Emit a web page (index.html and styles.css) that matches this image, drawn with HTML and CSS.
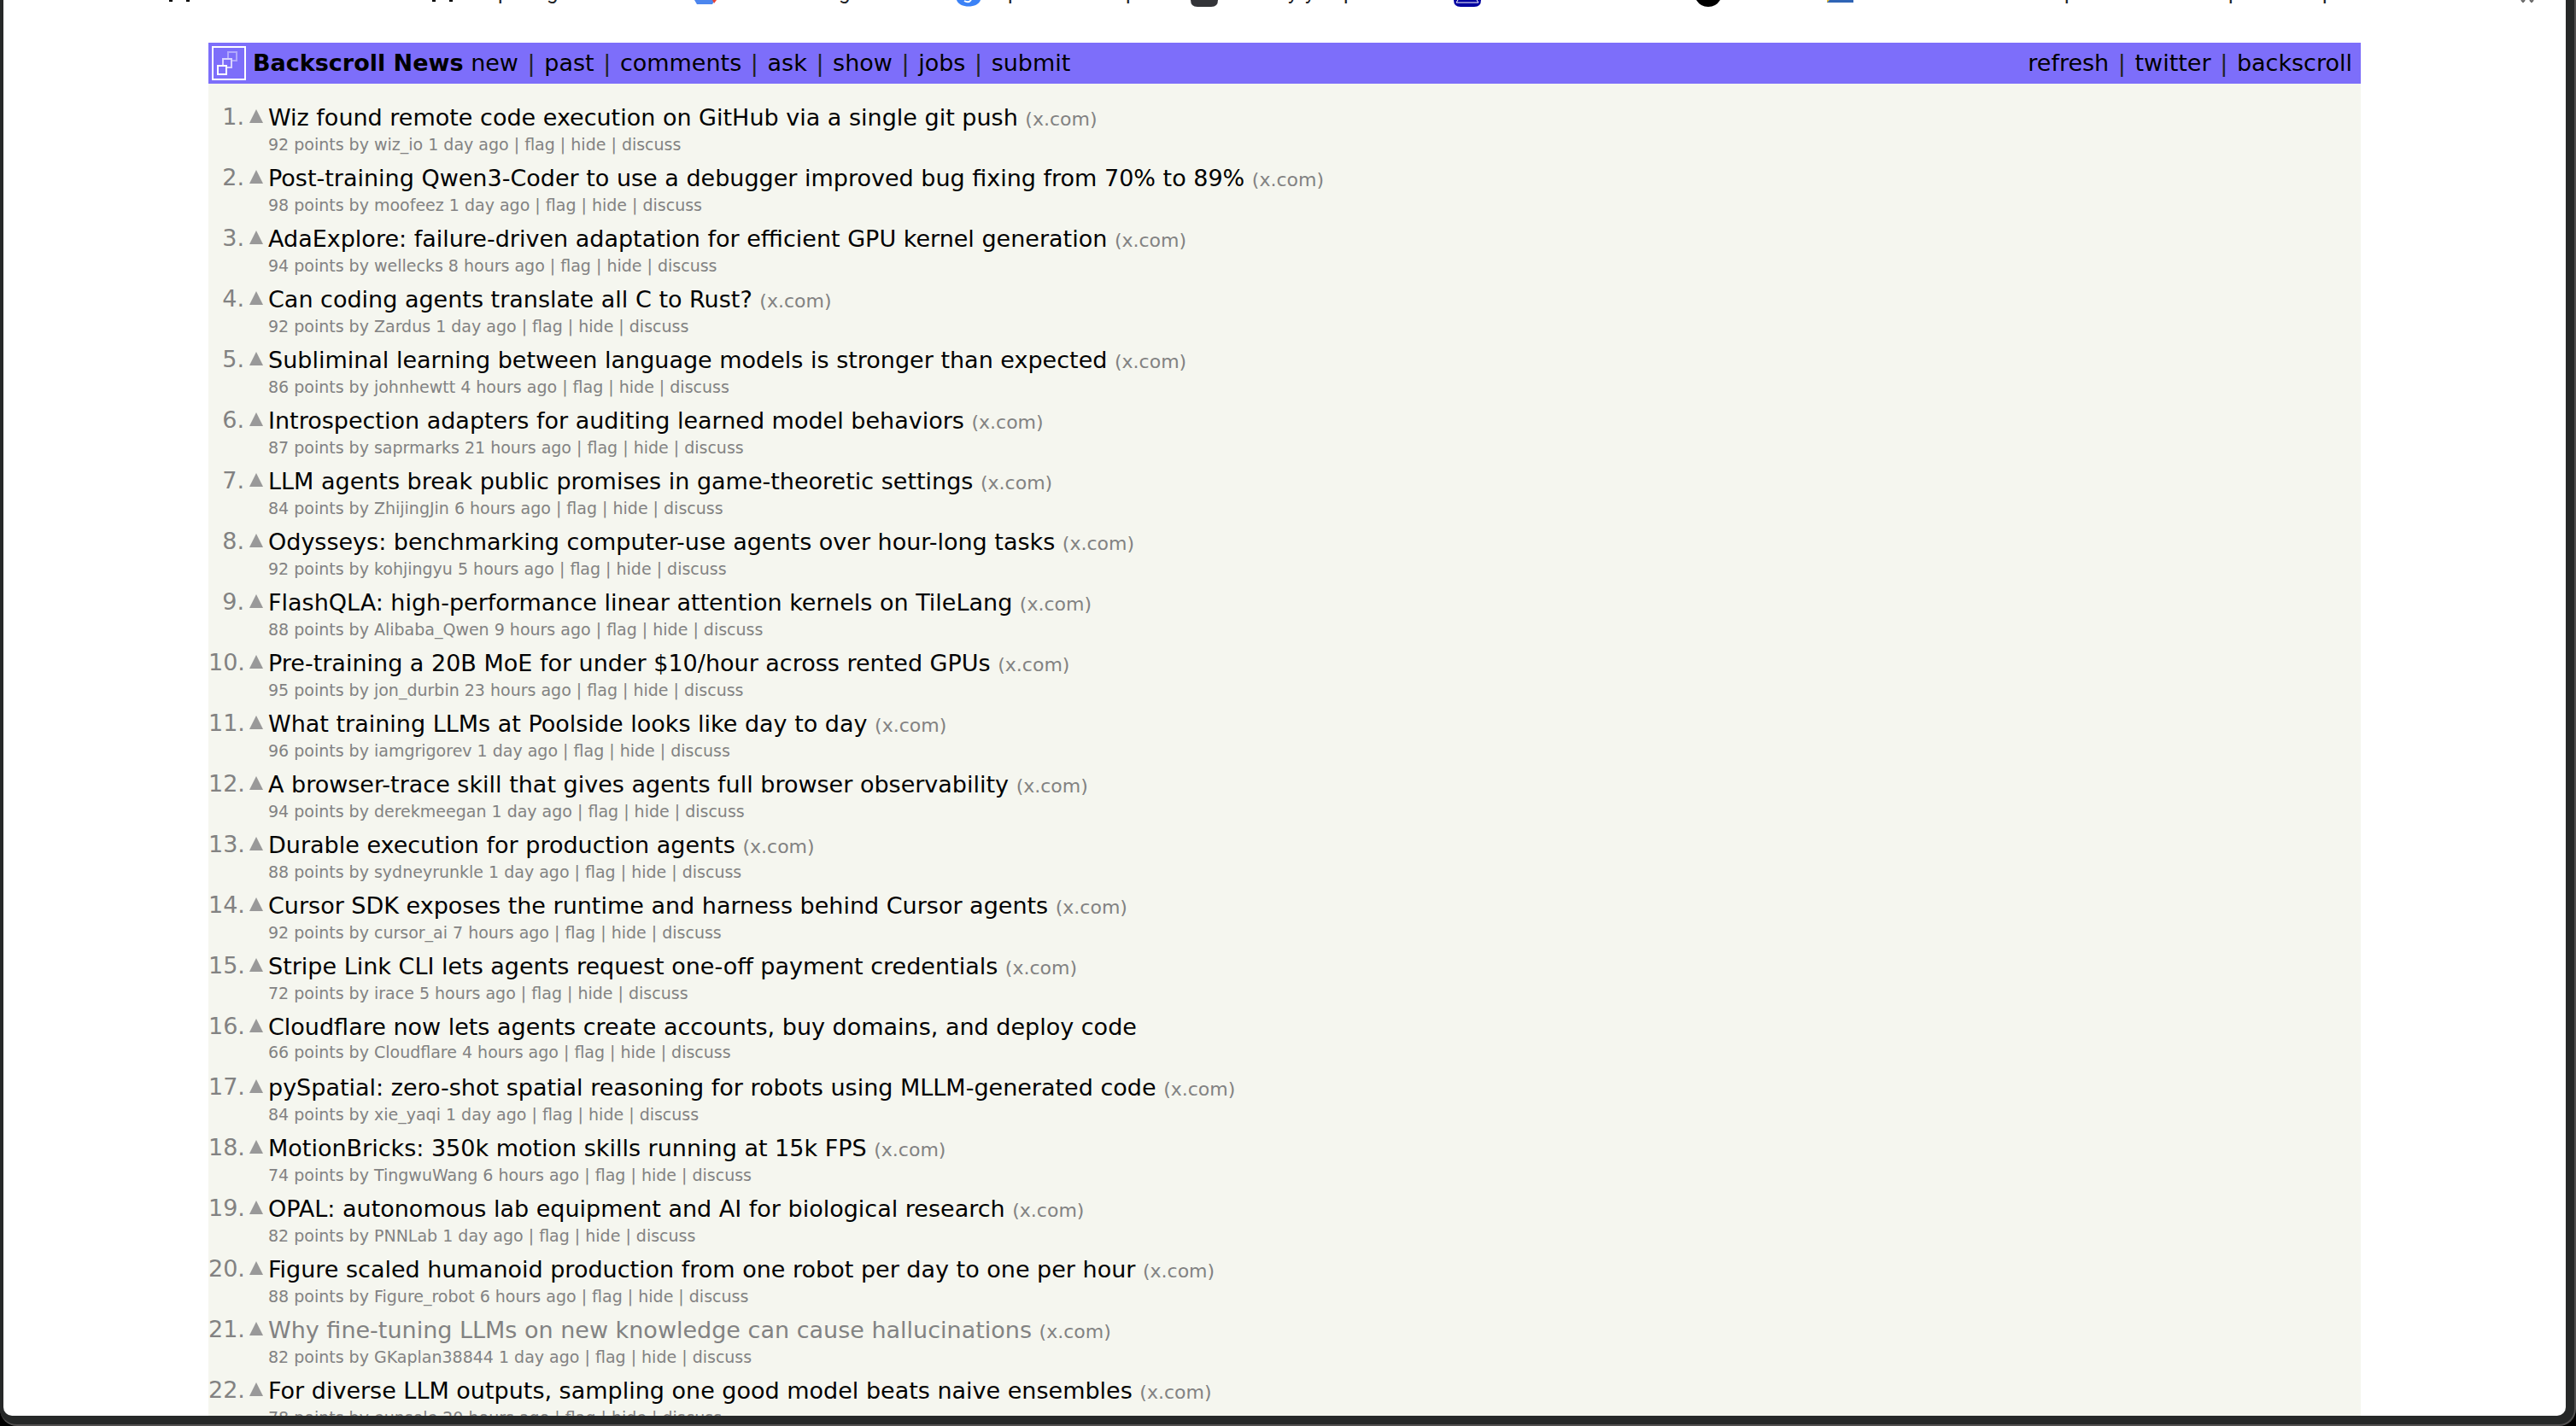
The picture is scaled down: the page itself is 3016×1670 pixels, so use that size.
FILE: index.html
```html
<!DOCTYPE html>
<html lang="en">
<head>
  <meta charset="UTF-8">
  <meta name="viewport" content="width=device-width, initial-scale=1.0">
  <title>Backscroll News</title>
  <link rel="stylesheet" href="styles.css">
</head>
<body>
  <div class="window">
    <div class="viewport">
      <!-- Bookmarks bar, scrolled almost out of view -->
      <div class="bookmarks">
        <svg class="bookmark-icons" width="2996" height="8" viewBox="4 0 2996 8" aria-hidden="true">
          <path d="M198 0h4v2h-4zM218 0h4v2h-4zM506 0h4v2h-4zM526 0h4v2h-4z" fill="#000"/>
          <path d="M813 0h24l-3 5h-18z" fill="#4c86ee"/>
          <path d="M834 0h5l-3 4z" fill="#ea4335"/>
          <path d="M1120 0h28c-3 10-25 10-28 0z" fill="#3b82f6"/>
          <path d="M1129 1q5 3 8-1" stroke="#fff" stroke-width="2" fill="none"/>
          <path d="M1394 0h32q0 8-8 8h-16q-8 0-8-8z" fill="#333438"/>
          <path d="M1702 0h32q0 8-8 8h-16q-8 0-8-8z" fill="#0000a0"/>
          <path d="M1705 3h26M1707 0l-2 3M1729 0l2 3" stroke="#fff" stroke-width="1"/>
          <path d="M1986 0h28q-5 8-14 8t-14-8z" fill="#000"/>
          <path d="M2139 0h31v3h-31z" fill="#2f64b5"/>
          <path d="M2139 0h3l-3 3z" fill="#f0c030"/>
          <path d="M2952 0l2 2 2-2M2962 0l2 2 2-2" stroke="#666" stroke-width="2" fill="none"/>
          <g class="bookmark-label">
            <text x="583" y="-1">p</text>
            <text x="640" y="-1">g</text>
            <text x="982" y="-1">g</text>
            <text x="1180" y="-1">p</text>
            <text x="1318" y="-1">p</text>
            <text x="1508" y="-1">y</text>
            <text x="1528" y="-1">y</text>
            <text x="1573" y="-1">p</text>
            <text x="2417" y="-1">p</text>
            <text x="2609" y="-1">p</text>
            <text x="2719" y="-1">p</text>
          </g>
        </svg>
      </div>

      <main class="page">
        <header class="topbar">
          <a class="logo" href="#" aria-label="Backscroll News home">
            <svg width="40" height="40" viewBox="0 0 40 40" fill="none" stroke="#fff" stroke-width="2">
              <rect x="1" y="1" width="38" height="38"/>
              <rect x="19" y="7" width="10" height="10" stroke="#b1a8fc"/>
              <rect x="13" y="15" width="10" height="10" fill="#7d6efa" stroke="#d8d3fe"/>
              <rect x="7" y="23" width="10" height="10" fill="#7d6efa"/>
            </svg>
          </a>
          <nav class="nav">
            <a class="brand" href="#">Backscroll News</a>
            <a href="#">new</a> <span class="sep">|</span>
            <a href="#">past</a> <span class="sep">|</span>
            <a href="#">comments</a> <span class="sep">|</span>
            <a href="#">ask</a> <span class="sep">|</span>
            <a href="#">show</a> <span class="sep">|</span>
            <a href="#">jobs</a> <span class="sep">|</span>
            <a href="#">submit</a>
          </nav>
          <nav class="nav nav-right">
            <a href="#">refresh</a> <span class="sep">|</span>
            <a href="#">twitter</a> <span class="sep">|</span>
            <a href="#">backscroll</a>
          </nav>
        </header>

        <ol class="stories" id="stories"></ol>
      </main>
    </div>
  </div>

  <script src="stories.js"></script>
</body>
</html>
```
FILE: styles.css
```css
* {
  box-sizing: border-box;
}

html,
body {
  height: 100%;
  margin: 0;
}

body {
  background: #000;
  font-family: Verdana, "DejaVu Sans", sans-serif;
  overflow: hidden;
}

a {
  color: inherit;
  text-decoration: none;
}

/* Browser window frame */
.window {
  height: 100vh;
  padding: 0 10px 10px 4px;
  border: solid #525050;
  border-width: 0 2px 2px 0;
  border-radius: 0 0 20px 20px;
  background: #262828;
}

.viewport {
  height: 100%;
  border-radius: 0 0 10px 10px;
  background: #fff;
  overflow: hidden;
}

.bookmarks {
  height: 50px;
  overflow: hidden;
}

.bookmark-icons {
  display: block;
}

.bookmark-label {
  fill: #202124;
  font-family: Roboto, sans-serif;
  font-size: 24px;
}

/* Page */
.page {
  width: 84%;
  margin: 0 auto;
  background: #f5f6ef;
}

.topbar {
  display: flex;
  align-items: center;
  padding: 4px;
  background: #7d6efa;
}

.logo,
.logo svg {
  display: block;
}

.nav {
  margin-left: 8px;
  font-size: 27px;
  line-height: 40px;
  white-space: nowrap;
}

.nav-right {
  margin-left: auto;
  padding-right: 6px;
}

.brand {
  font-weight: bold;
}

.sep {
  padding: 0 2px;
  color: #222;
}

/* Stories */
.stories {
  margin: 0;
  padding: 20px 0 0;
  list-style: none;
}

.story {
  display: grid;
  grid-template-columns: 42px 28px 1fr;
  height: 71px;
}

.rank {
  color: #828282;
  font-size: 27px;
  line-height: 38px;
  text-align: right;
}

.vote {
  width: 16px;
  height: 16px;
  margin: 10px 6px;
  padding: 0;
  border: 0;
  background: #999;
  clip-path: polygon(50% 0, 100% 100%, 0 100%);
}

.title {
  font-size: 27px;
  line-height: 40px;
  white-space: nowrap;
}

.visited {
  color: #828282;
}

.site {
  color: #828282;
  font-size: 22px;
}

.subtext {
  color: #828282;
  font-size: 19px;
  line-height: 18px;
  white-space: nowrap;
}
```
FILE: stories.js
```js
// title, points, user, age
const stories = [
  ['Wiz found remote code execution on GitHub via a single git push', 92, 'wiz_io', '1 day'],
  ['Post-training Qwen3-Coder to use a debugger improved bug fixing from 70% to 89%', 98, 'moofeez', '1 day'],
  ['AdaExplore: failure-driven adaptation for efficient GPU kernel generation', 94, 'wellecks', '8 hours'],
  ['Can coding agents translate all C to Rust?', 92, 'Zardus', '1 day'],
  ['Subliminal learning between language models is stronger than expected', 86, 'johnhewtt', '4 hours'],
  ['Introspection adapters for auditing learned model behaviors', 87, 'saprmarks', '21 hours'],
  ['LLM agents break public promises in game-theoretic settings', 84, 'ZhijingJin', '6 hours'],
  ['Odysseys: benchmarking computer-use agents over hour-long tasks', 92, 'kohjingyu', '5 hours'],
  ['FlashQLA: high-performance linear attention kernels on TileLang', 88, 'Alibaba_Qwen', '9 hours'],
  ['Pre-training a 20B MoE for under $10/hour across rented GPUs', 95, 'jon_durbin', '23 hours'],
  ['What training LLMs at Poolside looks like day to day', 96, 'iamgrigorev', '1 day'],
  ['A browser-trace skill that gives agents full browser observability', 94, 'derekmeegan', '1 day'],
  ['Durable execution for production agents', 88, 'sydneyrunkle', '1 day'],
  ['Cursor SDK exposes the runtime and harness behind Cursor agents', 92, 'cursor_ai', '7 hours'],
  ['Stripe Link CLI lets agents request one-off payment credentials', 72, 'irace', '5 hours'],
  ['Cloudflare now lets agents create accounts, buy domains, and deploy code', 66, 'Cloudflare', '4 hours', { site: '' }],
  ['pySpatial: zero-shot spatial reasoning for robots using MLLM-generated code', 84, 'xie_yaqi', '1 day'],
  ['MotionBricks: 350k motion skills running at 15k FPS', 74, 'TingwuWang', '6 hours'],
  ['OPAL: autonomous lab equipment and AI for biological research', 82, 'PNNLab', '1 day'],
  ['Figure scaled humanoid production from one robot per day to one per hour', 88, 'Figure_robot', '6 hours'],
  ['Why fine-tuning LLMs on new knowledge can cause hallucinations', 82, 'GKaplan38844', '1 day', { visited: true }],
  ['For diverse LLM outputs, sampling one good model beats naive ensembles', 78, 'eunsole', '20 hours'],
];

document.getElementById('stories').innerHTML = stories.map(([title, points, user, age, opts = {}], i) => {
  const site = opts.site === undefined ? 'x.com' : opts.site;
  return `
    <li class="story">
      <span class="rank">${i + 1}.</span>
      <button class="vote" type="button" aria-label="upvote"></button>
      <div>
        <div class="title">
          <a href="#"${opts.visited ? ' class="visited"' : ''}>${title}</a>
          ${site ? `<a class="site" href="#">(${site})</a>` : ''}
        </div>
        <div class="subtext">
          ${points} points by <a href="#">${user}</a> <a href="#">${age} ago</a> | <a href="#">flag</a> | <a href="#">hide</a> | <a href="#">discuss</a>
        </div>
      </div>
    </li>`;
}).join('');
```
